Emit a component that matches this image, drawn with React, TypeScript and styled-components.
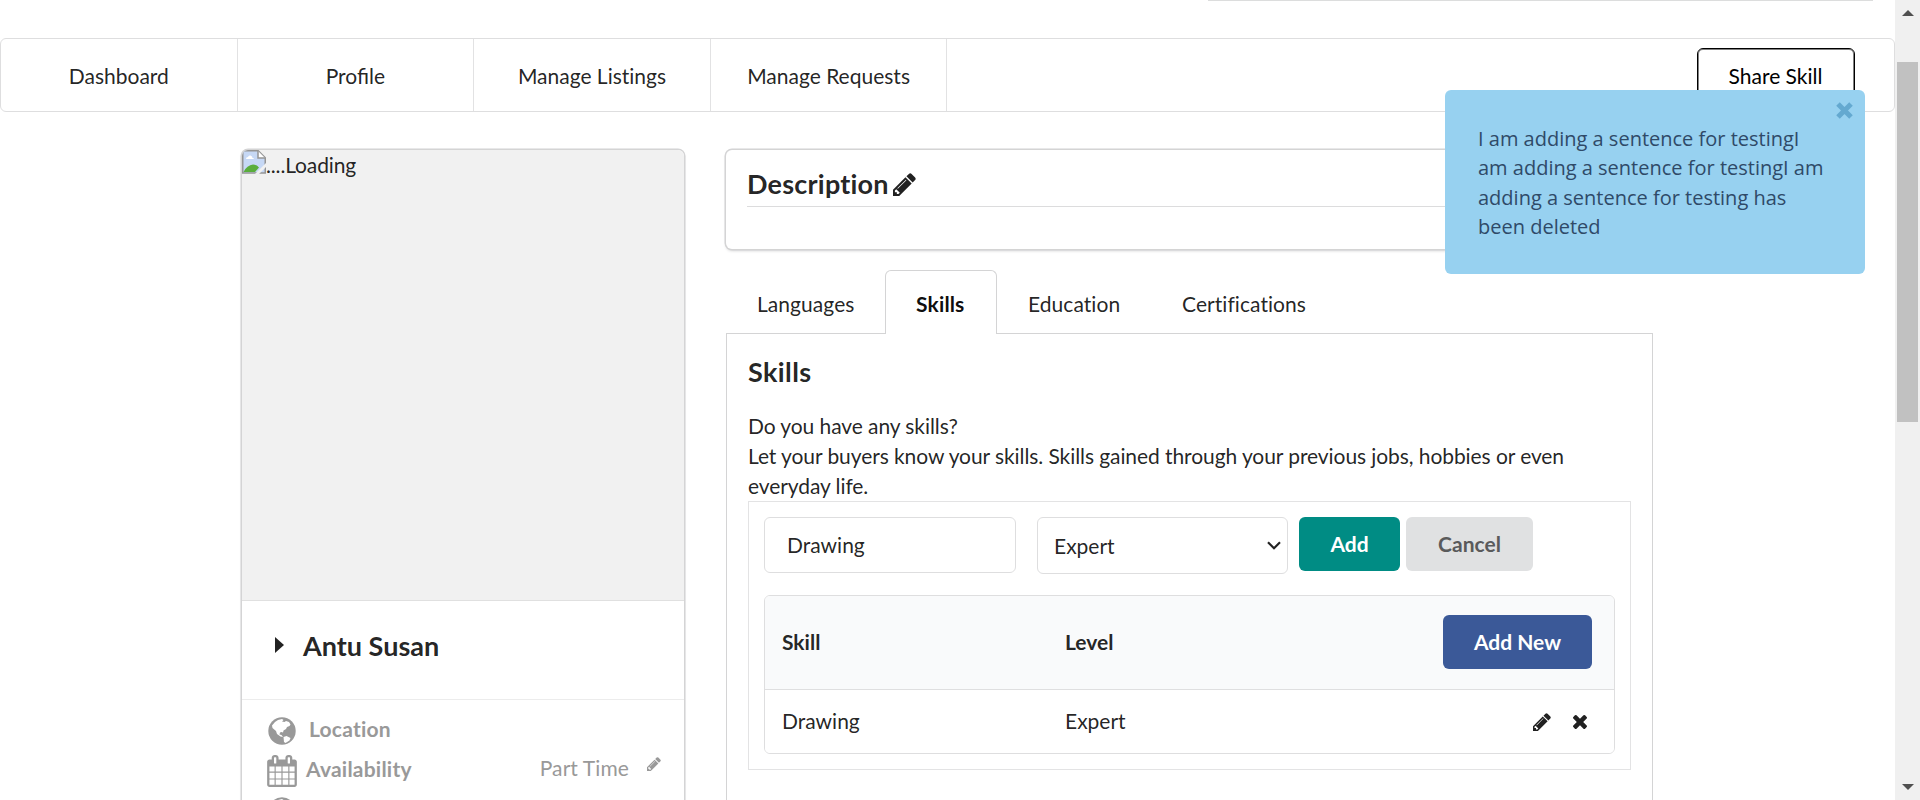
import React from "react";
import styled, { createGlobalStyle } from "styled-components";

const Global = createGlobalStyle`
  * { box-sizing: border-box; }
  html, body { margin: 0; padding: 0; height: 800px; overflow: hidden; background: #fff; }
  body { font-family: Lato, "Liberation Sans", sans-serif; font-size: 21px; line-height: 30px; color: rgba(0,0,0,.87); font-variant-ligatures: none; }
  button, input { font: inherit; color: inherit; }
`;

const Page = styled.div`
  display: flex;
  position: relative;
  width: 1920px;
  height: 800px;
  overflow: hidden;
`;
const Main = styled.main`
  width: 1895px;
  height: 800px;
  overflow: hidden;
`;
const SearchEdge = styled.div`
  width: 665px;
  height: 1px;
  margin: 0 0 37px 1208px;
  background: #dcdddd;
`;
const Nav = styled.nav`
  display: flex;
  height: 74px;
  border: 1px solid #dededf;
  border-radius: 6px;
`;
const NavItem = styled.a<{ $ligatures?: boolean }>`
  display: flex;
  align-items: center;
  justify-content: center;
  width: 236.6px;
  padding: 2px 0 0;
  border-right: 1px solid #e2e2e3;
  font-variant-ligatures: ${(p) => (p.$ligatures ? "normal" : "none")};
`;
const NavRight = styled.div`
  margin-left: auto;
  padding: 9px 39px 0 0;
`;
const ShareButton = styled.button`
  width: 158px;
  height: 56px;
  padding: 0 1px 0 0;
  border: 1px solid #000;
  border-radius: 6px;
  box-shadow: inset 0 0 0 1px #808080;
  background: #fff;
  color: #000;
`;
const Columns = styled.div`
  display: flex;
  align-items: flex-start;
  gap: 42px;
  padding: 38px 0 0 242px;
`;
const Card = styled.section`
  border-radius: 6px;
  box-shadow: 0 1.5px 3px 0 #d4d4d5, 0 0 0 1.5px #d4d4d5;
  background: #fff;
`;
const ProfileCard = styled(Card)`
  width: 442px;
  height: 720px;
  overflow: hidden;
`;
const Photo = styled.div`
  display: flex;
  align-items: flex-start;
  height: 450px;
  background: #f1f1f1;
`;
const PhotoAlt = styled.span`
  letter-spacing: -0.15px;
`;
const NameRow = styled.div`
  display: flex;
  align-items: center;
  height: 99px;
  padding: 0 0 8px 33px;
  border-top: 1px solid #e0e0e0;
`;
const Caret = styled.span`
  width: 0;
  height: 0;
  margin: 0 19px 3px 0;
  border-left: 9px solid #222;
  border-top: 8px solid transparent;
  border-bottom: 8px solid transparent;
`;
const Name = styled.h2`
  margin: 0;
  font-size: 27px;
  line-height: 34px;
`;
const Facts = styled.div`
  border-top: 1px solid #ececec;
  padding: 9px 23px 0 25px;
  color: #999;
`;
const Fact = styled.div<{ $gap: number; $indent?: number }>`
  display: flex;
  align-items: center;
  gap: ${(p) => p.$gap}px;
  height: 40px;
  padding-left: ${(p) => p.$indent ?? 0}px;
  > svg { flex: none; margin-top: 3px; }
`;
const FactLabel = styled.span`
  font-weight: 700;
  letter-spacing: 0.22px;
`;
const FactValue = styled.span`
  display: flex;
  align-items: center;
  gap: 18px;
  margin: -2px 0 0 auto;
  letter-spacing: 0.1px;
  svg { margin-top: -9px; }
`;
const Content = styled.div`
  width: 926px;
`;
const DescriptionCard = styled(Card)`
  height: 99px;
  padding: 17px 21px 0;
`;
const DescriptionTitle = styled.h3`
  display: flex;
  align-items: center;
  gap: 4px;
  height: 40px;
  margin: 0;
  padding-bottom: 6px;
  border-bottom: 1px solid #dcdcdd;
  font-size: 27px;
  letter-spacing: 0.22px;
  svg { margin-top: 1px; }
`;
const Tabs = styled.div`
  display: flex;
  height: 64px;
  margin-top: 21px;
`;
const Tab = styled.a<{ $w: number; $active?: boolean }>`
  position: relative;
  width: ${(p) => p.$w}px;
  height: 64px;
  padding: 18px 0 0 30px;
  border: 1px solid ${(p) => (p.$active ? "#d4d4d5" : "transparent")};
  border-bottom: 0;
  border-radius: 6px 6px 0 0;
  background: ${(p) => (p.$active ? "#fff" : "none")};
  color: ${(p) => (p.$active ? "rgba(0,0,0,.95)" : "rgba(0,0,0,.87)")};
  font-weight: ${(p) => (p.$active ? 700 : 400)};
  letter-spacing: ${(p) => (p.$active ? 0.15 : 0.06)}px;
`;
const TabPanel = styled.section`
  width: 927px;
  height: 520px;
  margin-top: -1px;
  padding: 21px 21px 0;
  border: 1px solid #d4d4d5;
`;
const PanelTitle = styled.h3`
  margin: 0 0 22px;
  font-size: 27px;
  line-height: 34px;
  letter-spacing: 0.4px;
`;
const Intro = styled.p`
  margin: 0;
  letter-spacing: -0.08px;
`;
const FormBox = styled.div`
  width: 883px;
  height: 269px;
  padding: 15px;
  border: 1px solid #e3e3e4;
`;
const FormRow = styled.div`
  display: flex;
  align-items: flex-start;
  height: 78px;
`;
const SkillInput = styled.input`
  width: 252px;
  height: 56px;
  margin-right: 21px;
  padding: 0 22px 2px;
  border: 1px solid #dededf;
  border-radius: 6px;
  outline: 0;
  background: #fff;
`;
const LevelSelect = styled.div`
  display: flex;
  align-items: center;
  justify-content: space-between;
  width: 251px;
  height: 57px;
  margin-right: 11px;
  padding: 0 6px 0 16px;
  border: 1px solid #dededf;
  border-radius: 6px;
`;
const Button = styled.button<{ $bg: string; $fg: string; $w: number }>`
  width: ${(p) => p.$w}px;
  height: 54px;
  padding: 0 0 1px;
  border: 0;
  border-radius: 6px;
  background: ${(p) => p.$bg};
  color: ${(p) => p.$fg};
  font-weight: 700;
`;
const CancelButton = styled(Button)`
  margin-left: 6px;
`;
const AddNewButton = styled(Button)`
  padding: 1px 0 0;
`;
const SkillTable = styled.div`
  width: 851px;
  height: 159px;
  border: 1px solid #dededf;
  border-radius: 6px;
  overflow: hidden;
`;
const TableRow = styled.div<{ $head?: boolean }>`
  display: grid;
  grid-template-columns: 283px 1fr auto;
  align-items: center;
  height: ${(p) => (p.$head ? 94 : 63)}px;
  padding: 0 ${(p) => (p.$head ? 22 : 27)}px 2px 17px;
  background: ${(p) => (p.$head ? "#f9fafb" : "#fff")};
  border-bottom: ${(p) => (p.$head ? "1px solid #dfdfe0" : "0")};
  font-weight: ${(p) => (p.$head ? 700 : 400)};
`;
const RowActions = styled.span`
  display: flex;
  align-items: center;
  gap: 22px;
  padding-top: 2px;
`;
const Toast = styled.aside`
  position: absolute;
  left: 1445px;
  top: 90px;
  width: 420px;
  height: 184px;
  padding: 34px 32px 0 33px;
  border-radius: 6px;
  background: #97d1f0;
  color: #2f4a68;
  font-family: "Open Sans", "Noto Sans", sans-serif;
  font-size: 20px;
  line-height: 29.4px;
  white-space: nowrap;
`;
const ToastClose = styled.span`
  position: absolute;
  right: 12px;
  top: 12px;
  display: flex;
`;
const Scrollbar = styled.div`
  display: flex;
  flex-direction: column;
  align-items: center;
  width: 25px;
  height: 800px;
  padding: 10px 0;
  background: #f0f0f0;
`;
const Arrow = styled.span<{ $down?: boolean }>`
  border: 6px solid transparent;
  border-top: ${(p) => (p.$down ? "6px solid #505050" : "0")};
  border-bottom: ${(p) => (p.$down ? "0" : "6px solid #505050")};
`;
const Thumb = styled.span`
  width: 21px;
  height: 360px;
  margin: 46px 0 auto;
  background: #c1c1c1;
`;

const Pencil = ({ size }: { size: number }) => (
  <svg width={size} height={size} viewBox="128 128 1536 1536" fill="currentColor">
    <path d="M491 1536l91-91-235-235-91 91v107h128v128h107zm523-928q0-22-22-22-10 0-17 7l-542 542q-7 7-7 17 0 22 22 22 10 0 17-7l542-542q7-7 7-17zm-54-192l416 416-832 832h-416v-416zm683 96q0 53-37 90l-166 166-416-416 166-165q36-38 90-38 53 0 91 38l235 234q37 39 37 91z" />
  </svg>
);
const Times = ({ size }: { size: number }) => (
  <svg width={size} height={size} viewBox="302 366 1188 1188" fill="currentColor">
    <path d="M1490 1322q0 40-28 68l-136 136q-28 28-68 28t-68-28l-294-294-294 294q-28 28-68 28t-68-28l-136-136q-28-28-28-68t28-68l294-294-294-294q-28-28-28-68t28-68l136-136q28-28 68-28t68 28l294 294 294-294q28-28 68-28t68 28l136 136q28 28 28 68t-28 68l-294 294 294 294q28 28 28 68z" />
  </svg>
);
const Calendar = () => (
  <svg width="30" height="32" viewBox="64 0 1664 1792" fill="currentColor">
    <path d="M192 1664h288v-288h-288v288zm352 0h320v-288h-320v288zm-352-352h288v-320h-288v320zm352 0h320v-320h-320v320zm-352-384h288v-288h-288v288zm736 736h320v-288h-320v288zm-384-736h320v-288h-320v288zm768 736h288v-288h-288v288zm-384-352h320v-320h-320v320zm-352-864v-288q0-13-9.500-22.500t-22.500-9.500h-64q-13 0-22.500 9.500t-9.500 22.500v288q0 13 9.500 22.500t22.500 9.500h64q13 0 22.500-9.500t9.500-22.500zm736 864h288v-320h-288v320zm-384-384h320v-288h-320v288zm384 0h288v-288h-288v288zm32-480v-288q0-13-9.500-22.500t-22.500-9.500h-64q-13 0-22.500 9.500t-9.500 22.500v288q0 13 9.500 22.500t22.500 9.500h64q13 0 22.500-9.500t9.500-22.500zm384-64v1280q0 52-38 90t-90 38h-1408q-52 0-90-38t-38-90v-1280q0-52 38-90t90-38h128v-96q0-66 47-113t113-47h64q66 0 113 47t47 113v96h384v-96q0-66 47-113t113-47h64q66 0 113 47t47 113v96h128q52 0 90 38t38 90z" />
  </svg>
);
const Globe = () => (
  <svg width="28" height="28" viewBox="0 0 28 28">
    <circle cx="14" cy="14" r="13.7" fill="#999" />
    <path d="M4 8.500L7 5l3-2 4-1 1.500 1-1.500 1.500 2.500.5L18 4l3 1 1.500 2.500-1 1.500-2.500 1-1 2-2.500 1.500-.5 2-1.500-.5-1.500.5-.5 2 2 .5 1.500 2-2.500-.5-3.500-2.500-1-3L4.500 11z" fill="#fff" />
    <path d="M15.500 20l3-1 4 2-1 2.500-4 2.500-1.500-1z" fill="#fff" />
  </svg>
);
const BrokenImage = () => (
  <svg width="24" height="24" viewBox="0 0 24 24">
    <path d="M.75.75h15.500l7 7V23H.75z" fill="#c6d8f5" stroke="#959595" strokeWidth="1.500" />
    <path d="M16 1v7h7" fill="#fff" stroke="#959595" strokeWidth="1.500" />
    <path d="M4 9q0-2 2-2 .5-2 2.500-1.500Q10.500 6 10.500 8q1.500 0 1.500 1z" fill="#fff" />
    <path d="M1.500 22Q5 15 11 14.500q4 0 6 3L13 22z" fill="#5aae3c" />
    <path d="M24 13L13 24h4l7-7z" fill="#f1f1f1" />
  </svg>
);
const Chevron = () => (
  <svg width="14" height="9" viewBox="0 0 14 9" fill="none" stroke="#222" strokeWidth="2.200">
    <path d="M1 1.200l6 6 6-6" />
  </svg>
);

export default function App() {
  return (
    <>
      <Global />
      <Page>
        <Main>
          <SearchEdge />
          <Nav>
            <NavItem>Dashboard</NavItem>
            <NavItem $ligatures>Profile</NavItem>
            <NavItem>Manage Listings</NavItem>
            <NavItem>Manage Requests</NavItem>
            <NavRight>
              <ShareButton>Share Skill</ShareButton>
            </NavRight>
          </Nav>
          <Columns>
            <ProfileCard>
              <Photo>
                <BrokenImage />
                <PhotoAlt>....Loading</PhotoAlt>
              </Photo>
              <NameRow>
                <Caret />
                <Name>Antu Susan</Name>
              </NameRow>
              <Facts>
                <Fact $gap={13} $indent={1}>
                  <Globe />
                  <FactLabel>Location</FactLabel>
                </Fact>
                <Fact $gap={9}>
                  <Calendar />
                  <FactLabel>Availability</FactLabel>
                  <FactValue>
                    Part Time
                    <Pencil size={14} />
                  </FactValue>
                </Fact>
                <Fact $gap={13} $indent={1}>
                  <Globe />
                </Fact>
              </Facts>
            </ProfileCard>
            <Content>
              <DescriptionCard>
                <DescriptionTitle>
                  Description
                  <Pencil size={23} />
                </DescriptionTitle>
              </DescriptionCard>
              <Tabs>
                <Tab $w={159}>Languages</Tab>
                <Tab $w={112} $active>Skills</Tab>
                <Tab $w={154}>Education</Tab>
                <Tab $w={190}>Certifications</Tab>
              </Tabs>
              <TabPanel>
                <PanelTitle>Skills</PanelTitle>
                <Intro>
                  Do you have any skills?
                  <br />
                  Let your buyers know your skills. Skills gained through your previous jobs, hobbies or even everyday life.
                </Intro>
                <FormBox>
                  <FormRow>
                    <SkillInput defaultValue="Drawing" />
                    <LevelSelect>
                      Expert
                      <Chevron />
                    </LevelSelect>
                    <Button $bg="#008c84" $fg="#fff" $w={101}>Add</Button>
                    <CancelButton $bg="#e0e1e2" $fg="#5a5a5b" $w={127}>Cancel</CancelButton>
                  </FormRow>
                  <SkillTable>
                    <TableRow $head>
                      <span>Skill</span>
                      <span>Level</span>
                      <AddNewButton $bg="#3b5998" $fg="#fff" $w={149}>Add New</AddNewButton>
                    </TableRow>
                    <TableRow>
                      <span>Drawing</span>
                      <span>Expert</span>
                      <RowActions>
                        <Pencil size={18} />
                        <Times size={14} />
                      </RowActions>
                    </TableRow>
                  </SkillTable>
                </FormBox>
              </TabPanel>
            </Content>
          </Columns>
        </Main>
        <Scrollbar>
          <Arrow />
          <Thumb />
          <Arrow $down />
        </Scrollbar>
        <Toast>
          I am adding a sentence for testingI
          <br />
          am adding a sentence for testingI am
          <br />
          adding a sentence for testing has
          <br />
          been deleted
          <ToastClose>
            <svg width="17" height="17" viewBox="0 0 17 17" stroke="#64a9d0" strokeWidth="5">
              <path d="M2 2l13 13M15 2L2 15" />
            </svg>
          </ToastClose>
        </Toast>
      </Page>
    </>
  );
}
